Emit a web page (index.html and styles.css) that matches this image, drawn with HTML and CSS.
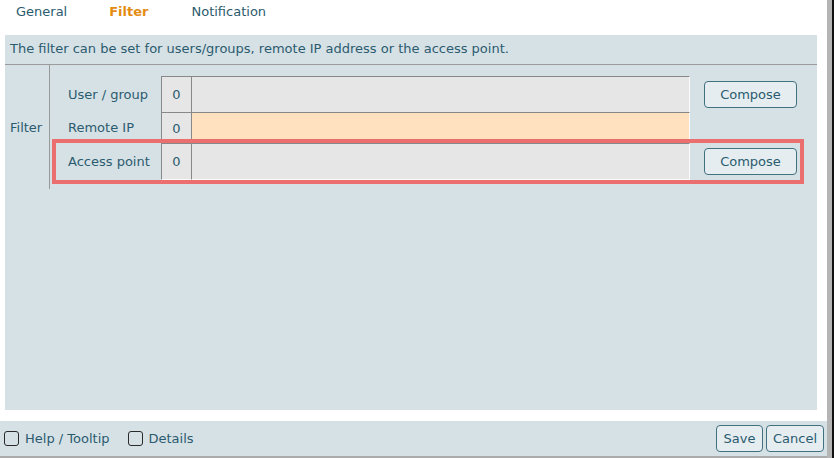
FILE: index.html
```html
<!DOCTYPE html>
<html>
<head>
<meta charset="utf-8">
<link rel="stylesheet" href="styles.css">
</head>
<body>
<div class="frame">
  <div class="main">
    <nav class="tabs">
      <span class="tab">General</span>
      <span class="tab active">Filter</span>
      <span class="tab">Notification</span>
    </nav>
    <section class="panel">
      <div class="intro">The filter can be set for users/groups, remote IP address or the access point.</div>
      <div class="filter">
        <div class="filter-label">Filter</div>
        <div class="rows">
          <div class="row r1">
            <div class="label">User / group</div>
            <div class="num">0</div>
            <div class="value"></div>
            <button class="btn compose">Compose</button>
          </div>
          <div class="row r2">
            <div class="label">Remote IP</div>
            <div class="num">0</div>
            <div class="value peach"></div>
            <div class="spacer"></div>
          </div>
          <div class="row r3 highlight">
            <div class="label">Access point</div>
            <div class="num">0</div>
            <div class="value"></div>
            <button class="btn compose">Compose</button>
          </div>
        </div>
      </div>
    </section>
    <footer class="bar">
      <label class="check"><span class="box"></span>Help / Tooltip</label>
      <label class="check"><span class="box"></span>Details</label>
      <div class="actions">
        <button class="btn save">Save</button>
        <button class="btn cancel">Cancel</button>
      </div>
    </footer>
  </div>
  <div class="edge"></div>
</div>
</body>
</html>
```

FILE: styles.css
```css
* { box-sizing: border-box; }
html, body { margin: 0; padding: 0; background: #fff; }
body {
  font-family: "DejaVu Sans", sans-serif;
  font-size: 13px;
  line-height: 15px;
  color: #2b5b6e;
}
.frame { display: flex; height: 458px; width: 835px; }
.main { width: 827px; display: flex; flex-direction: column; }
.edge { width: 7px; background: #b5b5b5; border-right: 2px solid #111; }

.tabs { height: 35px; display: flex; gap: 42px; padding: 4px 0 0 16px; }
.tab { color: #2b5b6e; }
.tab.active { color: #e38d14; font-weight: bold; margin-right: 1px; }

.panel {
  margin: 0 10px 0 5px;
  height: 375px;
  background: #d6e1e6;
}
.intro {
  height: 30px;
  padding: 6px 0 0 5px;
  border-bottom: 1px solid #9c9c9c;
}
.filter { display: flex; height: 124px; }
.filter-label {
  width: 45px;
  padding-left: 5px;
  border-right: 1px solid #999;
  display: flex;
  align-items: center;
}
.rows { padding: 11px 0 0 6px; display: flex; flex-direction: column; }
.row { display: flex; width: 744px; padding-right: 3px; align-items: stretch; }
.r1 { height: 36px; }
.r2 { height: 31px; }
.r3 { height: 37px; }
.label { width: 105px; padding-left: 12px; display: flex; align-items: center; }
.num {
  width: 30px;
  background: #e6e6e6;
  border-left: 1px solid #888;
  border-top: 1px solid #888;
  display: flex; align-items: center; justify-content: center;
}
.value {
  width: 499px;
  background: #e6e6e6;
  border-left: 1px solid #888;
  border-top: 1px solid #888;
  border-right: 1px solid #fafafa;
}
.value.peach { background: #ffe1c0; }
.r3 .num, .r3 .value { border-bottom: 1px solid #fafafa; }
.spacer { width: 107px; }
.highlight { outline: 4px solid #ec6f6f; outline-offset: 0; }

.btn {
  font-family: "DejaVu Sans", sans-serif;
  font-size: 13px;
  color: #2b5b6e;
  background: #e5edf1;
  border: 1px solid #41707f;
  border-radius: 4px;
  height: 27px;
  padding: 0;
  margin: 0;
}
.compose { width: 93px; margin-left: 14px; align-self: center; }
.save { width: 47px; }
.cancel { width: 58px; }

.bar {
  height: 37px;
  margin-top: 11px;
  background: #d6e1e6;
  border-bottom: 2px solid #ababab;
  display: flex;
  align-items: center;
  padding: 0 3px 0 4px;
}
.check { display: flex; align-items: center; gap: 6px; margin-right: 18px; }
.box {
  width: 15px; height: 15px;
  border: 1.5px solid #2a2a2a;
  border-radius: 3px;
}
.actions { margin-left: auto; display: flex; gap: 3px; }
```
